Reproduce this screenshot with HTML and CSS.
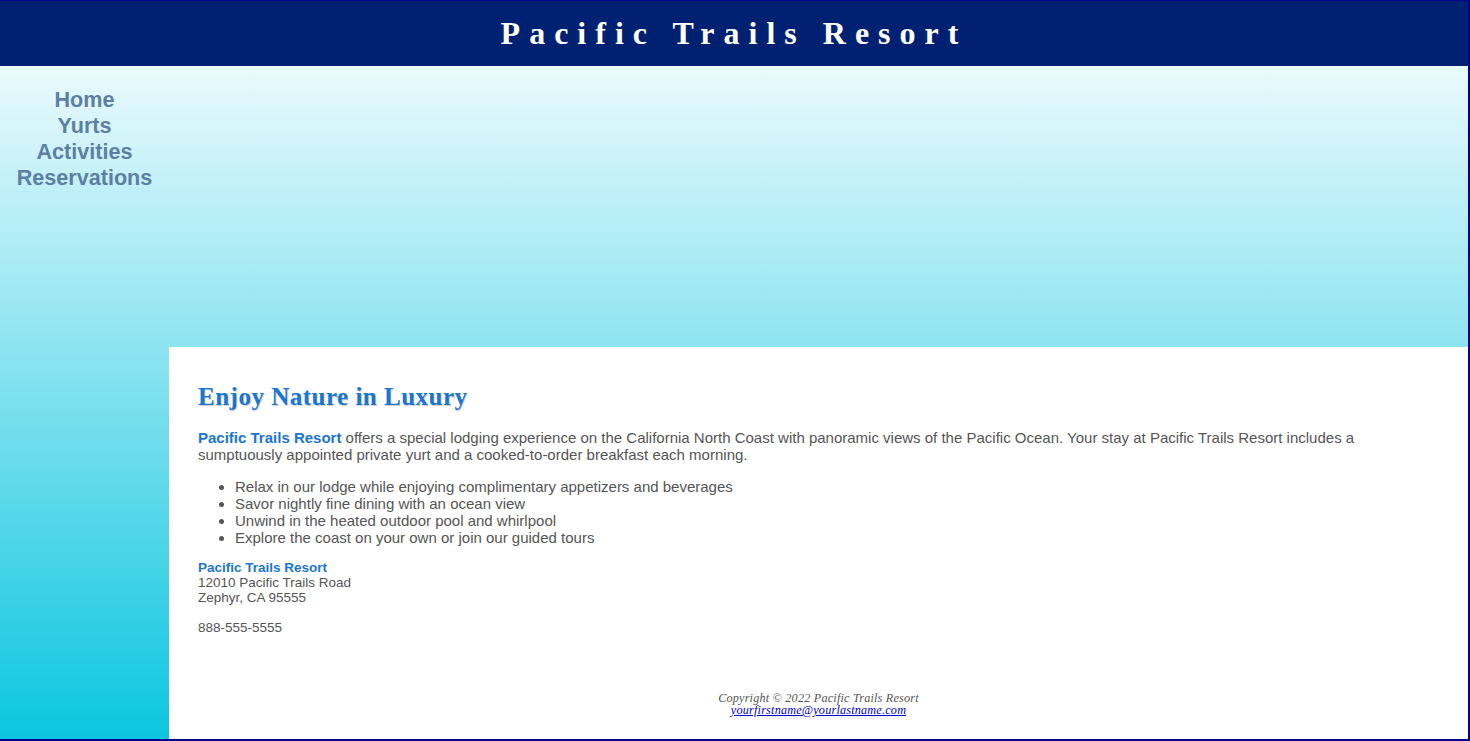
FILE: index.html
```html
<!DOCTYPE html>
<html lang="en">
<head>
<meta charset="utf-8">
<title>Pacific Trails Resort</title>
<link rel="stylesheet" href="styles.css">
</head>
<body>
<div class="wrapper">
  <header class="site-header">
    <h1 class="site-title">Pacific Trails Resort</h1>
  </header>
  <nav class="site-nav">
    <ul class="nav-list">
      <li><a class="nav-link" href="#">Home</a></li>
      <li><a class="nav-link" href="#">Yurts</a></li>
      <li><a class="nav-link" href="#">Activities</a></li>
      <li><a class="nav-link" href="#">Reservations</a></li>
    </ul>
  </nav>
  <div class="hero"></div>
  <main class="content">
    <h2 class="headline">Enjoy Nature in Luxury</h2>
    <p class="intro"><span class="resort">Pacific Trails Resort</span> offers a special lodging experience on the California North Coast with panoramic views of the Pacific Ocean. Your stay at Pacific Trails Resort includes a sumptuously appointed private yurt and a cooked-to-order breakfast each morning.</p>
    <ul class="features">
      <li>Relax in our lodge while enjoying complimentary appetizers and beverages</li>
      <li>Savor nightly fine dining with an ocean view</li>
      <li>Unwind in the heated outdoor pool and whirlpool</li>
      <li>Explore the coast on your own or join our guided tours</li>
    </ul>
    <div class="address">
      <span class="resort">Pacific Trails Resort</span><br>
      12010 Pacific Trails Road<br>
      Zephyr, CA 95555
    </div>
    <div class="phone">888-555-5555</div>
    <footer class="site-footer">
      <small>Copyright &copy; 2022 Pacific Trails Resort</small><br>
      <a class="mail" href="#">yourfirstname@yourlastname.com</a>
    </footer>
  </main>
</div>
</body>
</html>
```

FILE: styles.css
```css
html, body {
  margin: 0;
  padding: 0;
}
body {
  font-family: "Liberation Sans", Arial, sans-serif;
  color: #555555;
  background: #ffffff;
}
.wrapper {
  display: grid;
  grid-template-columns: 169px 1fr;
  grid-template-rows: 65px 281px 392px;
  border-top: 1px solid #00008b;
  border-right: 2px solid #00008b;
  border-bottom: 2px solid #00008b;
  background: linear-gradient(#ffffff, #0bc6e0);
}
.site-header {
  grid-column: 1 / 3;
  background: #002171;
  display: flex;
  align-items: center;
  justify-content: center;
  padding-bottom: 2px;
}
.site-title {
  margin: 0;
  color: #ffffff;
  font-family: "Liberation Serif", Georgia, serif;
  font-weight: bold;
  font-size: 32px;
  letter-spacing: 9px;
  line-height: 1;
}
.site-nav {
  grid-column: 1;
  grid-row: 2 / 4;
  padding-top: 21px;
}
.nav-list {
  list-style: none;
  margin: 0;
  padding: 0;
  text-align: center;
}
.nav-link {
  font-weight: bold;
  font-size: 21.6px;
  line-height: 26px;
  color: #5c7fa3;
  text-decoration: none;
}
.hero {
  grid-column: 2;
  grid-row: 2;
}
.content {
  grid-column: 2;
  grid-row: 3;
  background: #ffffff;
  padding: 36px 29px 0;
  display: flex;
  flex-direction: column;
  font-size: 15px;
  line-height: 17px;
}
.headline {
  margin: 0 0 18px;
  font-family: "Liberation Serif", Georgia, serif;
  font-size: 25px;
  letter-spacing: 0.5px;
  line-height: 28px;
  color: #1976d2;
  text-shadow: 1px 1px 1px #cccccc;
}
.intro {
  margin: 0 0 15px;
}
.resort {
  color: #1976d2;
  font-weight: bold;
}
.features {
  margin: 0 0 14px;
  padding-left: 37px;
}
.address {
  font-size: 13.5px;
  line-height: 15px;
}
.phone {
  font-size: 13.5px;
  line-height: 15px;
  margin-top: 15px;
}
.site-footer {
  margin-top: 57px;
  text-align: center;
  font-family: "Liberation Serif", Georgia, serif;
  font-style: italic;
  font-size: 12.2px;
  letter-spacing: 0.2px;
  line-height: 12px;
}
.site-footer small {
  font-size: 12.2px;
}
.mail {
  color: #0000cc;
}
```
